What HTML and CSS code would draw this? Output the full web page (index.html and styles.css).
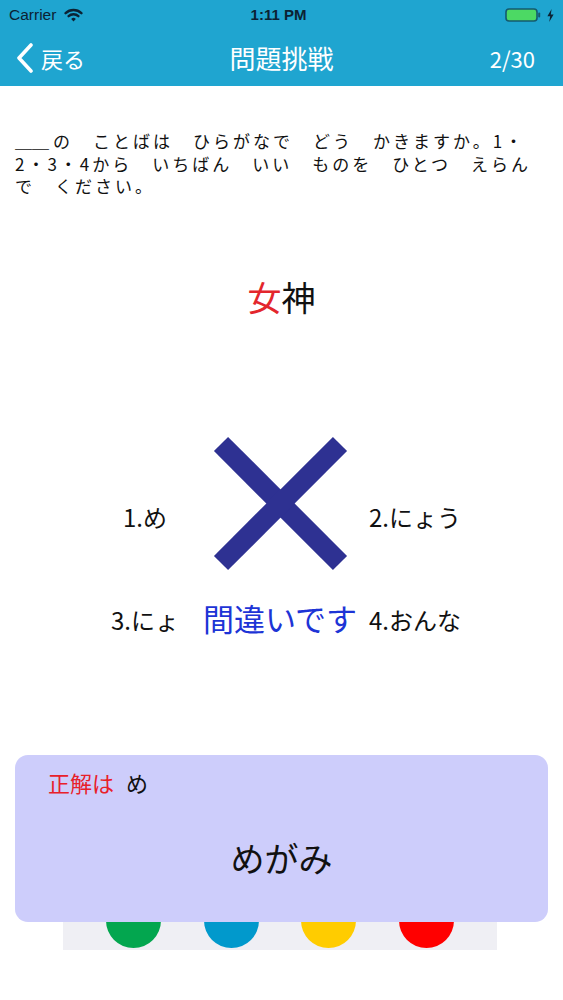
FILE: index.html
```html
<!DOCTYPE html>
<html lang="ja">
<head>
<meta charset="utf-8">
<title>問題挑戦</title>
<link rel="stylesheet" href="styles.css">
</head>
<body>
<header class="topbar">
  <div class="status">
    <div class="status-left">
      <span class="carrier">Carrier</span>
      <svg class="wifi" width="19" height="14" viewBox="0 0 19 14">
        <path d="M1.6 5.2 A11.5 11.5 0 0 1 17.4 5.2" fill="none" stroke="currentColor" stroke-width="2.4" stroke-linecap="round"/>
        <path d="M4.6 8.2 A7.2 7.2 0 0 1 14.4 8.2" fill="none" stroke="currentColor" stroke-width="2.4" stroke-linecap="round"/>
        <path d="M7.2 10.9 A3.4 3.4 0 0 1 11.8 10.9 L9.5 13.4 Z" fill="currentColor"/>
      </svg>
    </div>
    <div class="time">1:11 PM</div>
    <div class="status-right">
      <svg class="battery" width="37" height="14" viewBox="0 0 37 14">
        <rect x="1" y="1" width="31" height="12" rx="3" fill="#4cd964" stroke="#155a6e" stroke-width="1.6"/>
        <rect x="33.2" y="4.5" width="2" height="5" rx="1" fill="#155a6e"/>
      </svg>
      <svg class="bolt" width="7" height="13" viewBox="0 0 7 13">
        <path d="M4.6 0 L0.4 7.3 H3.2 L2.2 13 L6.6 5.4 H3.8 Z" fill="#0c2233"/>
      </svg>
    </div>
  </div>
  <nav class="nav">
    <div class="back">
      <svg class="chevron" width="18" height="30" viewBox="0 0 18 30">
        <polyline points="15,2 3,15 15,28" fill="none" stroke="#fff" stroke-width="3.6" stroke-linecap="round" stroke-linejoin="round"/>
      </svg>
      <span>戻る</span>
    </div>
    <h1 class="title">問題挑戦</h1>
    <div class="count">2/30</div>
  </nav>
</header>

<main class="content">
  <p class="question"><span class="blank">＿＿</span>の　ことばは　ひらがなで　どう　かきますか。1・<br>2・3・4から　いちばん　いい　ものを　ひとつ　えらん<br>で　ください。</p>

  <div class="kanji"><span class="mark">女</span>神</div>

  <div class="answers">
    <div class="opt">1.め</div>
    <div class="opt mid">
      <svg class="cross" width="135" height="135" viewBox="0 0 135 135">
        <line x1="8" y1="8" x2="127" y2="127" stroke="#2e3192" stroke-width="20"/>
        <line x1="127" y1="8" x2="8" y2="127" stroke="#2e3192" stroke-width="20"/>
      </svg>
    </div>
    <div class="opt">2.にょう</div>
    <div class="opt">3.にょ</div>
    <div class="opt verdict">間違いです</div>
    <div class="opt">4.おんな</div>
  </div>

  <div class="bottom">
    <div class="buttons">
      <span class="dot green"></span>
      <span class="dot blue"></span>
      <span class="dot yellow"></span>
      <span class="dot red"></span>
    </div>
    <div class="result">
      <div class="answer-line"><span class="label">正解は</span><span class="correct">め</span></div>
      <div class="reading">めがみ</div>
    </div>
  </div>
</main>
</body>
</html>
```

FILE: styles.css
```css
* { box-sizing: border-box; }

html, body {
  margin: 0;
  padding: 0;
  background: #ffffff;
}

body {
  width: 563px;
  font-family: "Noto Sans CJK JP", "Noto Sans", sans-serif;
  color: #111111;
}

.topbar {
  background: #1fa5d0;
  height: 86px;
}

.status {
  height: 30px;
  display: grid;
  grid-template-columns: 1fr auto 1fr;
  align-items: center;
  color: #0c2233;
  font-family: "Liberation Sans", Arial, sans-serif;
}

.status-left {
  display: flex;
  align-items: center;
  gap: 8px;
  padding-left: 9px;
}

.carrier {
  font-size: 15.5px;
  line-height: 30px;
}

.wifi {
  display: block;
  color: #0c2233;
  margin-top: -1px;
}

.time {
  font-size: 15px;
  font-weight: bold;
  line-height: 30px;
  margin-left: -6px;
}

.status-right {
  display: flex;
  justify-content: flex-end;
  align-items: center;
  gap: 5px;
  padding-right: 9px;
}

.battery, .bolt { display: block; }

.nav {
  height: 56px;
  display: grid;
  grid-template-columns: 1fr auto 1fr;
  align-items: center;
  color: #ffffff;
  padding-bottom: 1px;
}

.back {
  display: flex;
  align-items: center;
  gap: 7px;
  padding-left: 16px;
  font-size: 22px;
}

.chevron { display: block; }

.title {
  margin: 0;
  font-size: 26px;
  font-weight: normal;
  line-height: 40px;
}

.count {
  text-align: right;
  padding-right: 28px;
  font-size: 22px;
}

.content {
  display: flex;
  flex-direction: column;
}

.question {
  margin: 44px 0 0 0;
  padding: 0 10px 0 15px;
  font-size: 17px;
  line-height: 22.5px;
  letter-spacing: 3px;
  color: #111111;
  white-space: nowrap;
}

.blank {
  letter-spacing: 0;
  margin-right: 4px;
}

.kanji {
  margin-top: 79px;
  text-align: center;
  font-size: 34px;
  line-height: 40px;
  color: #111111;
}

.mark { color: #e3262c; }

.answers {
  margin-top: 180px;
  display: grid;
  grid-template-columns: repeat(3, 135px);
  grid-auto-rows: 40px;
  row-gap: 63px;
  justify-content: center;
  margin-left: -3px;
}

.opt {
  display: flex;
  justify-content: center;
  font-size: 24px;
  line-height: 40px;
  color: #111111;
  white-space: nowrap;
}

.mid {
  position: relative;
}

.cross {
  position: absolute;
  top: -61px;
  left: 50%;
  margin-left: -67px;
  display: block;
}

.verdict {
  font-size: 31px;
  color: #1d34d6;
  margin-top: -2px;
}

.bottom {
  position: relative;
  margin-top: 250px;
}

.buttons {
  margin: 0 66px 0 63px;
  height: 60px;
  background: #efeff4;
  padding: 3px 22px 0 22px;
  display: grid;
  grid-template-columns: repeat(4, 1fr);
  justify-items: center;
  align-items: start;
}

.dot {
  width: 55px;
  height: 55px;
  border-radius: 50%;
  display: block;
}

.green { background: #03a64f; }
.blue { background: #0199cc; }
.yellow { background: #ffcc00; }
.red { background: #ff0000; }

.result {
  position: absolute;
  top: -135px;
  left: 15px;
  right: 15px;
  height: 167px;
  background: #cdcdfb;
  border-radius: 13px;
  padding: 12px 0 0 33px;
}

.answer-line {
  font-size: 22px;
  line-height: 30px;
}

.label { color: #e8202a; }

.correct {
  margin-left: 12px;
  color: #111111;
}

.reading {
  margin-top: 41px;
  margin-left: -33px;
  text-align: center;
  font-size: 34px;
  line-height: 40px;
  color: #111111;
}
```
